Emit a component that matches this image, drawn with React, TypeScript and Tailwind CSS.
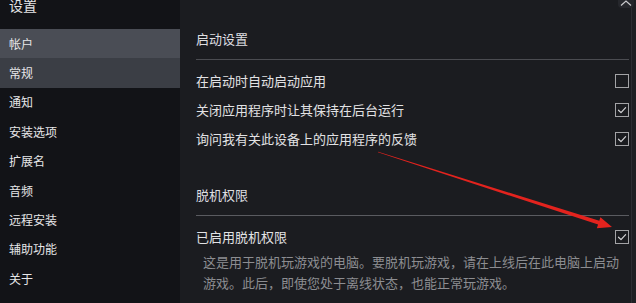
import React from "react";

const font = { fontFamily: '"Noto Sans CJK SC", "Noto Sans", sans-serif' };

const navItems = [
  "帐户",
  "常规",
  "通知",
  "安装选项",
  "扩展名",
  "音频",
  "远程安装",
  "辅助功能",
  "关于",
];

function Checkbox({ checked }: { checked: boolean }) {
  return (
    <div className="w-[14px] h-[14px] border-[1.5px] border-[#a3a3a6] flex items-center justify-center">
      {checked && (
        <svg width="10" height="10" viewBox="0 0 10 10" fill="none">
          <path
            d="M1.5 5.2 L4 7.6 L8.6 2.6"
            stroke="#d4d4d6"
            strokeWidth="1.2"
            strokeLinecap="round"
            strokeLinejoin="round"
          />
        </svg>
      )}
    </div>
  );
}

function OptionRow({ label, checked }: { label: string; checked: boolean }) {
  return (
    <div className="h-[29px] flex items-center justify-between">
      <span className="text-[13px] text-[#e2e2e4]">{label}</span>
      <Checkbox checked={checked} />
    </div>
  );
}

export default function App() {
  return (
    <div
      className="relative flex w-[636px] h-[303px] overflow-hidden bg-[#1b1c20]"
      style={font}
    >
      {/* 侧边栏 */}
      <div className="w-[180px] shrink-0 bg-[#121317] flex flex-col">
        <div className="h-[29px] px-[9px]">
          <div className="text-[14px] leading-[14px] -mt-[2px] text-[#e4e4e6]">
            设置
          </div>
        </div>
        {navItems.map((item, i) => (
          <div
            key={item}
            className={
              "h-[29.4px] px-[9px] flex items-center text-[12px] text-[#e6e6e8] " +
              (i === 0 ? "bg-[#4a4d55]" : i === 1 ? "bg-[#3b3e45]" : "")
            }
          >
            {item}
          </div>
        ))}
      </div>

      {/* 主内容 */}
      <div className="flex-1 flex">
        <div className="flex-1 pl-[16px] pr-[2px]">
          <div className="pt-[30px] text-[13px] leading-[17px] text-[#dedee0]">
            启动设置
          </div>
          <div className="mt-[12px] h-px bg-[#4b4c51]" />
          <div className="mt-[6px]">
            <OptionRow label="在启动时自动启动应用" checked={false} />
            <OptionRow label="关闭应用程序时让其保持在后台运行" checked />
            <OptionRow label="询问我有关此设备上的应用程序的反馈" checked />
          </div>

          <div className="mt-[33px] text-[13px] leading-[17px] text-[#dedee0]">
            脱机权限
          </div>
          <div className="mt-[12px] h-px bg-[#5a5b60]" />
          <div className="mt-[6px]">
            <OptionRow label="已启用脱机权限" checked />
          </div>
          <div className="pl-[7px] text-[13px] leading-[21px] text-[#8c8d91]">
            这是用于脱机玩游戏的电脑。要脱机玩游戏，请在上线后在此电脑上启动
            <br />
            游戏。此后，即使您处于离线状态，也能正常玩游戏。
          </div>
        </div>
        {/* 滚动条 */}
        <div className="w-[5px] border-l border-[#2c2d32] bg-[#1e1f23]" />
      </div>

      {/* 右上角按钮 */}
      <div className="absolute right-[2px] -top-[6px] w-[16px] h-[14px] rounded-[4px] bg-[#26272c] flex items-end justify-center pb-[2px]">
        <svg width="12" height="6" viewBox="0 0 12 6" fill="none">
          <path d="M1 5.5 L6 1 L11 5.5" stroke="#c9c9cc" strokeWidth="1.2" />
        </svg>
      </div>

      {/* 红色箭头标注 */}
      <svg
        className="absolute left-0 top-0 pointer-events-none"
        width="636"
        height="303"
        viewBox="0 0 636 303"
      >
        <polygon
          points="378.1,151.7 599.3,220.8 600.4,217.2 612,227 596.8,228.2 598.1,224.6 377.9,152.3"
          fill="#e3231e"
        />
      </svg>
    </div>
  );
}
